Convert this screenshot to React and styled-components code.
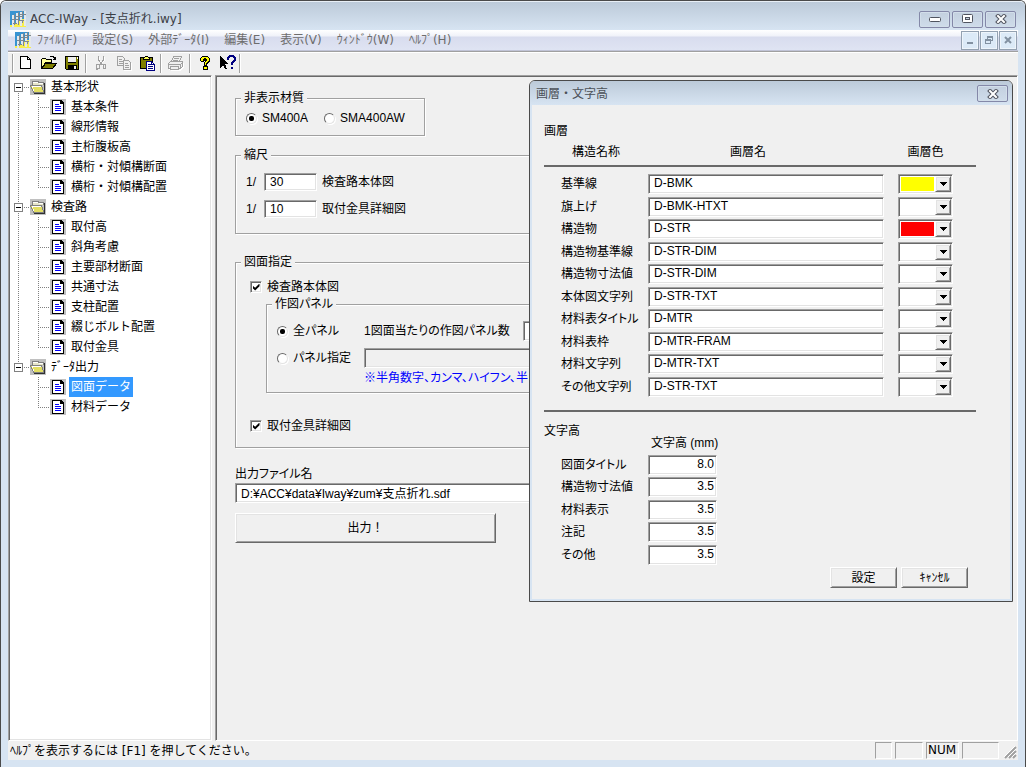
import React, { useState } from 'react';
import styled, { createGlobalStyle, css } from 'styled-components';

const GlobalStyle = createGlobalStyle`
  * {
    box-sizing: border-box;
  }

  body {
    background: #fff;
    color: #000;
    font: 12px/16px 'DejaVu Sans', 'Noto Sans CJK JP', sans-serif;
    margin: 0;
  }

  input,
  select,
  button {
    color: inherit;
    font: inherit;
    margin: 0;
  }
`;

const sunken = css`
  border: 1px solid;
  border-color: #a0a0a0 #fff #fff #a0a0a0;
  box-shadow: inset 1px 1px 0 #696969, inset -1px -1px 0 #e3e3e3;
`;

const raised = css`
  background: #f0f0f0;
  border: 1px solid;
  border-color: #fff #696969 #696969 #fff;
  box-shadow: inset 1px 1px 0 #e3e3e3, inset -1px -1px 0 #a0a0a0;
`;

const formFont = css`
  font-family: 'Liberation Sans', 'Noto Sans CJK JP', sans-serif;
  font-feature-settings: 'palt';
`;

/* window frame */

const Window = styled.div`
  background: #d7e4f2;
  border: solid #4a4a4a;
  border-width: 1px 1px 0;
  border-radius: 6px 6px 0 0;
  display: flex;
  flex-direction: column;
  min-height: 100vh;
  padding: 0 7px 7px;
  position: relative;
`;

const TitleBar = styled.header`
  align-items: center;
  background: linear-gradient(#bccad9, #d7e4f2);
  border-radius: 5px 5px 0 0;
  border-top: 1px solid #e8eff6;
  color: #3c4046;
  display: flex;
  gap: 4px;
  height: 29px;
  margin: 0 -7px;
  padding: 6px 9px 0;
`;

const Title = styled.h1`
  flex: 1;
  font-size: 12px;
  font-weight: normal;
  margin: 0;
`;

const CaptionButtons = styled.div`
  display: flex;
  gap: 2px;
`;

const CaptionButton = styled.button`
  align-items: center;
  background: linear-gradient(#c3d0df, #cfdcea);
  border: 1px solid #8488a8;
  border-radius: 2px;
  box-shadow: inset 0 0 0 1px #d2deea;
  display: flex;
  height: 17px;
  justify-content: center;
  padding: 0;
  width: 31px;
`;

const MenuBar = styled.nav`
  align-items: center;
  background: linear-gradient(#fff, #f0f2f9 6px, #d8dcee 7px, #dfe4f3);
  border-bottom: 1px solid #c0c3d6;
  color: #6d6d6d;
  display: flex;
  height: 21px;
  padding-left: 7px;
`;

const MenuItems = styled.div`
  display: flex;
  flex: 1;
  gap: 15px;
  padding-left: 6px;
`;

const MenuButton = styled.button`
  background: none;
  border: 0;
  padding: 0;
`;

const ChildButton = styled.button`
  align-items: center;
  background: #dceaf7;
  border: 1px solid #93a1b1;
  box-shadow: inset 0 0 0 1px #eef5fb;
  display: flex;
  height: 19px;
  justify-content: center;
  padding: 0;
  width: 18px;
`;

const ChildButtons = styled.div`
  display: flex;
  gap: 1px;
  padding-right: 1px;
`;

const ToolBar = styled.div`
  align-items: center;
  background: #f0f0f0;
  border-top: 1px solid #a0a0a0;
  box-shadow: inset 0 1px 0 #fff;
  display: flex;
  height: 24px;
  padding: 0 0 1px 4px;
`;

const ToolButton = styled.button`
  background: none;
  border: 0;
  display: grid;
  height: 20px;
  padding: 0;
  place-items: center;
  width: 23px;
`;

const Separator = styled.span`
  border-left: 1px solid #a0a0a0;
  border-right: 1px solid #fff;
  height: 19px;
  margin: 0 2px;
  width: 2px;
`;

const ToolEdge = styled(Separator)`
  margin: 0;
`;

const Workspace = styled.div`
  background: #f0f0f0;
  display: grid;
  flex: 1;
  gap: 3px;
  grid-template-columns: 204px minmax(0, 1fr);
`;

/* tree */

const TreePane = styled.aside`
  ${sunken}
  background: #fff;
  padding: 1px;
`;

const TreeList = styled.ul`
  list-style: none;
  margin: 0;
  padding: 0;
`;

const TreeRow = styled.div`
  align-items: center;
  display: flex;
  height: 20px;
`;

const TreeText = styled.a`
  background: ${(p) => (p.$active ? '#3399ff' : 'transparent')};
  color: ${(p) => (p.$active ? '#fff' : '#000')};
  line-height: 20px;
  margin-left: 3px;
  padding: 0 2px;
  text-decoration: none;
`;

/* form */

const FormPane = styled.main`
  ${formFont}
  border-left: 1px solid #a0a0a0;
  border-top: 1px solid #a0a0a0;
  border-bottom: 1px solid #fff;
  border-right: 1px solid #fff;
  box-shadow: inset 1px 1px 0 #696969;
  padding: 14px 20px 14px 19px;
`;

const Group = styled.fieldset`
  border: 1px solid #a0a0a0;
  box-shadow: 1px 1px 0 #fff, inset 1px 1px 0 #fff;
  margin: 0;
  min-width: 0;
  padding: 0;

  & > legend {
    background: #f0f0f0;
    line-height: 16px;
    margin-left: 5px;
    padding: 0 3px;
  }
`;

const MaterialGroup = styled(Group)`
  width: 190px;
`;

const ScaleGroup = styled(Group)`
  margin-top: 11px;
`;

const DrawingGroup = styled(Group)`
  margin-top: 20px;
  padding-bottom: 13px;
`;

const PanelGroup = styled(Group)`
  margin: 1px 14px 25px 30px;
`;

const MaterialRow = styled.div`
  display: flex;
  gap: 16px;
  padding: 4px 10px 9px;
`;

const ScaleRows = styled.div`
  display: grid;
  gap: 10px;
  padding: 10px 10px 16px;
`;

const ScaleRow = styled.label`
  align-items: center;
  display: grid;
  gap: 5px;
  grid-template-columns: 13px 53px auto;
  height: 17px;
`;

const CheckRow = styled.div`
  padding-left: 14px;

  legend + & {
    padding-top: 9px;
  }
`;

const PanelGrid = styled.div`
  align-items: center;
  display: grid;
  gap: 7px 0;
  grid-template-columns: 87px minmax(0, 1fr);
  padding: 9px 10px 0;
`;

const CountField = styled.div`
  align-items: center;
  display: grid;
  grid-template-columns: 159px 53px;
`;

const Note = styled.p`
  color: #00f;
  margin: 2px 0 6px 97px;
  white-space: nowrap;
`;

const Choice = styled.label`
  align-items: center;
  display: flex;
  gap: 5px;
`;

const Radio = styled.input.attrs({ type: 'radio' })`
  appearance: none;
  background: #fff;
  border: 1px solid;
  border-color: #696969 #e3e3e3 #e3e3e3 #696969;
  border-radius: 50%;
  box-shadow: 1px 1px 0 #fff;
  display: grid;
  height: 11px;
  place-items: center;
  width: 11px;

  &:checked::before {
    background: #000;
    border-radius: 2px;
    content: '';
    height: 5px;
    width: 5px;
  }
`;

const CheckBox = styled.input.attrs({ type: 'checkbox' })`
  ${sunken}
  appearance: none;
  background: #fff;
  display: grid;
  height: 12px;
  place-items: center;
  width: 12px;

  &:checked::before {
    background: #000;
    clip-path: polygon(0 30%, 38% 62%, 100% 0, 100% 40%, 38% 100%, 0 66%);
    content: '';
    height: 7px;
    width: 7px;
  }
`;

const TextBox = styled.input.attrs({ type: 'text' })`
  ${sunken}
  ${formFont}
  background: #fff;
  display: block;
  height: 20px;
  line-height: 14px;
  padding: 0 5px 2px;
  text-align: ${(p) => (p.$numeric ? 'right' : 'left')};
  width: 100%;

  &:disabled {
    background: #f0f0f0;
  }
`;

const ScaleBox = styled(TextBox)`
  height: 18px;
  padding-bottom: 0;
`;

const NumberBox = styled(TextBox)`
  padding: 0 2px 2px;
`;

const OutputField = styled.label`
  display: grid;
  gap: 1px;
  margin: 18px 0 10px;
`;

const PushButton = styled.button`
  ${raised}
  ${formFont}
  font-feature-settings: normal;
  height: ${(p) => (p.$large ? 30 : 21)}px;
  padding: 0;
  width: ${(p) => (p.$large ? 261 : 67)}px;
`;

/* dialog */

const Dialog = styled.section`
  ${formFont}
  background: #f0f0f0;
  border: 1px solid #4a4a4a;
  border-radius: 6px 6px 0 0;
  box-shadow: inset 0 0 0 2px #d7e4f2;
  padding: 0 2px 2px;
  position: absolute;
  right: 12px;
  top: 79px;
  width: 484px;
`;

const DialogTitle = styled.header`
  align-items: center;
  background: linear-gradient(#bccad9, #d7e4f2);
  border-radius: 5px 5px 0 0;
  color: #4b5057;
  display: flex;
  height: 24px;
  justify-content: space-between;
  margin: 0 -2px;
  padding: 1px 4px 0 6px;
`;

const DialogHeading = styled.h2`
  font-feature-settings: normal;
  font-size: 12px;
  font-weight: normal;
  margin: 0;
`;

const DialogBody = styled.div`
  padding: 18px 34px 11px 12px;
`;

const SectionTitle = styled.h3`
  font-size: 12px;
  font-weight: normal;
  margin: 0;
`;

const LayerTable = styled.table`
  border-bottom: 2px solid #696969;
  border-spacing: 0;
  padding-bottom: 11px;
  table-layout: fixed;
  width: 100%;

  th,
  td {
    font-weight: normal;
    padding: 0;
    vertical-align: top;
  }

  thead th {
    border-bottom: 2px solid #696969;
    height: 28px;
    vertical-align: middle;
  }

  tbody::before {
    content: '';
    display: block;
    height: 7px;
  }

  tbody tr:nth-child(odd) {
    height: 23px;
  }

  tbody tr:nth-child(even) {
    height: 22px;
  }
`;

const NameHead = styled.th`
  width: 104px;
`;

const LayerHead = styled.th`
  && {
    padding-right: 50px;
  }
`;

const ColorHead = styled.th`
  width: 55px;
`;

const EdgeHead = styled.th`
  width: 23px;
`;

const RowHead = styled.th`
  line-height: 20px;
  text-align: left;

  label {
    padding-left: 17px;
  }
`;

const LayerCell = styled.td`
  && {
    padding-right: 14px;
  }
`;

const SelectBox = styled.div`
  position: relative;
`;

const ColorSelect = styled.select`
  ${sunken}
  appearance: none;
  background: #fff;
  border-radius: 0;
  display: block;
  height: 20px;
  padding: 2px 18px 2px 2px;
  width: 100%;

  ${(p) =>
    p.$color &&
    css`
      background: linear-gradient(${p.$color}, ${p.$color}) content-box, #fff;
    `}
`;

const DropArrow = styled.span`
  ${raised}
  display: grid;
  height: 16px;
  place-items: center;
  pointer-events: none;
  position: absolute;
  right: 2px;
  top: 2px;
  width: 16px;
`;

const HeightHead = styled.div`
  display: grid;
  grid-template-columns: 104px auto;
  margin: 11px 0 4px;
`;

const HeightUnit = styled.span`
  padding: 12px 0 0 3px;
`;

const HeightGrid = styled.div`
  display: grid;
  grid-auto-rows: 22px 23px;
  grid-template-columns: 87px 69px;
  padding-left: 17px;

  label {
    line-height: 20px;
  }
`;

const DialogActions = styled.div`
  display: flex;
  gap: 4px;
  justify-content: flex-end;
  padding-right: 8px;
`;

/* status bar */

const StatusBar = styled.footer`
  align-items: center;
  background: #f0f0f0;
  display: flex;
  gap: 3px;
  height: 19px;
  padding-left: 2px;
`;

const StatusText = styled.span`
  flex: 1;
`;

const StatusCell = styled.span`
  border: 1px solid;
  border-color: #a0a0a0 #fff #fff #a0a0a0;
  height: 17px;
  line-height: 15px;
  padding-left: 1px;
  width: ${(p) => p.$width}px;
`;

/* drawings */

const AppIcon = () => (
  <svg width="16" height="16" shapeRendering="crispEdges" aria-hidden="true">
    <path fill="#3894d2" d="M0 0h16v16H0z" />
    <path fill="#f8ee4a" d="M6 10h2V9h3V8h3V7h2v9H0v-2h3v-2h3z" />
    <path
      fill="#e4e8ea"
      d="M2 4h2v12H2zM6 2h2v11H6zM10 1h2v14h-2zM14 0h2v15h-2z"
    />
    <path
      fill="#7d8890"
      d="M4 3h1v11H4zM8 1h1v13H8zM12 0h1v7h-1zM12 9h1v6h-1zM2 8h6v1H2zM6 5h6v1H6zM10 3h6v1h-6zM3 12h4v1H3zM9 9h5v1H9z"
    />
    <path fill="#f8ee4a" d="M5 13h3v2H5zM9 12h1v4H9zM12 12h2v4h-2z" />
  </svg>
);

const MinimizeIcon = () => (
  <svg width="12" height="8">
    <rect x="0.5" y="2.5" width="11" height="4" rx="1" fill="#fff" stroke="#50545f" />
  </svg>
);

const MaximizeIcon = () => (
  <svg width="12" height="10">
    <rect x="0.5" y="0.5" width="10" height="8" rx="1" fill="#fff" stroke="#50545f" />
    <rect x="3.5" y="3.5" width="4" height="2" fill="#c5d1df" stroke="#50545f" />
  </svg>
);

const CloseIcon = () => (
  <svg width="12" height="10" fill="none" strokeLinecap="square">
    <path d="M3 2l6 6M9 2L3 8" stroke="#50545f" strokeWidth="4" />
    <path d="M3 2l6 6M9 2L3 8" stroke="#fff" strokeWidth="2" />
  </svg>
);

const ChildMinimizeIcon = () => (
  <svg width="8" height="8" shapeRendering="crispEdges">
    <path d="M1 6h6v2H1z" fill="#8291a1" />
  </svg>
);

const ChildRestoreIcon = () => (
  <svg width="9" height="9" shapeRendering="crispEdges" fill="none" stroke="#8291a1">
    <path d="M2.500 3V.5h5v4H6M3 1.500h5" />
    <path d="M.5 3.500h5v4h-5zM1 4.500h5" />
  </svg>
);

const ChildCloseIcon = () => (
  <svg width="8" height="8">
    <path d="M1 1l6 6M7 1L1 7" stroke="#8291a1" strokeWidth="2" />
  </svg>
);

const NewIcon = () => (
  <svg width="16" height="16" shapeRendering="crispEdges">
    <path d="M2.500 1.500h7l3 3v9h-10z" fill="#fff" stroke="#000" />
    <path d="M9.500 1.500v3h3" fill="none" stroke="#000" />
  </svg>
);

const OpenIcon = () => (
  <svg width="16" height="16" shapeRendering="crispEdges">
    <path d="M.5 13.500v-9l1-1h3l1 1h5v3h-6z" fill="#ffff9a" stroke="#000" />
    <path d="M.5 13.500l4-5h11l-4 5z" fill="#808000" stroke="#000" />
    <path d="M9 1.500h3v1h1v1h1M12 4.500h3M14.500 2v3" fill="none" stroke="#000" />
  </svg>
);

const SaveIcon = () => (
  <svg width="16" height="16" shapeRendering="crispEdges">
    <path d="M1.500 1.500h13v13h-12l-1-1z" fill="#808000" stroke="#000" />
    <path d="M4 1h8v7H4zM4 10h9v5H4z" fill="#000" />
    <path d="M4 2h8v5H4zM10 11h2v3h-2z" fill="#f0f0f0" />
    <path d="M13 2h1v2h-1z" fill="#fff" />
  </svg>
);

const CutIcon = () => (
  <svg width="16" height="16" shapeRendering="crispEdges" fill="none">
    <path d="M6.500 2v4l4 5M11.500 2v3l-4 5" stroke="#fff" />
    <path d="M5.500 1v4l4 5M10.500 1v4l-4 5" stroke="#a0a0a0" />
    <path d="M4 9.500h2v4H4v1H3v-4zM10 9.500h2v4h-2z" stroke="#a0a0a0" />
  </svg>
);

const CopyIcon = () => (
  <svg width="16" height="16" shapeRendering="crispEdges" stroke="#a0a0a0" fill="#f0f0f0">
    <path d="M1.500 1.500h5l2 2v7h-7zM3 4.500h3M3 6.500h4M3 8.500h4" />
    <path d="M7.500 5.500h5l2 2v7h-7zM9 8.500h3M9 10.500h4M9 12.500h4" />
    <path d="M15.500 8v7.500H8" stroke="#fff" fill="none" />
  </svg>
);

const PasteIcon = () => (
  <svg width="16" height="16" shapeRendering="crispEdges">
    <path d="M1.500 2.500h12v11h-12z" fill="#808000" stroke="#000" />
    <path d="M4.500 3.500v-1h1l1-1h2l1 1h1v2h-6z" fill="#ffff5a" stroke="#000" />
    <path d="M7.500 6.500h5l3 3v6h-8z" fill="#fff" stroke="#000080" />
    <path d="M9 9.500h3M9 11.500h5M9 13.500h5M12.500 7v2.500H15" fill="none" stroke="#000080" />
  </svg>
);

const PrintIcon = () => (
  <svg width="17" height="16" shapeRendering="crispEdges" stroke="#a0a0a0" fill="#f0f0f0">
    <path d="M4.500 6.500l2-5h8l-2 5zM7 3.500h5M6 5.500h5" />
    <path d="M1.500 8.500l2-2h12v5l-2 2h-12zM2 9.500h12M13.500 10v3M14 8.500h1" />
    <path d="M3.500 11.500h8v3h-8z" />
    <path d="M2 14.500h1M4 15.500h9l3-3V8" stroke="#fff" fill="none" />
  </svg>
);

const HelpIcon = () => (
  <svg width="16" height="16" shapeRendering="crispEdges">
    <path d="M5 1h6v1h1v1h1v4h-1v1h-1v1h-1v2h1v4H6v-4h1V7h1V6H7v1H4V6H3V3h1V2h1z" fill="#000" />
    <path
      d="M5 2h6v1h1v3h-1v1h-1v1H9v2H8V7h1V6h1V4H9V3H7v1H6v2H4V3h1zM7 12h3v2H7z"
      fill="#ff0"
    />
  </svg>
);

const ContextHelpIcon = () => (
  <svg width="16" height="16" shapeRendering="crispEdges">
    <path d="M0 1l8 8H5l2 5H5l-2-4-3 3z" fill="#000" />
    <path d="M8 5V3l2-2h3l2 2v2l-3 3v2M12 12v2" stroke="#000080" strokeWidth="2" fill="none" />
  </svg>
);

const FolderIcon = () => (
  <svg width="16" height="16" shapeRendering="crispEdges" aria-hidden="true">
    <path fill="#c0c0c0" d="M0 0h16v16H0z" />
    <path d="M2.500 6v-3l1-1h4l1 1h4.500v3" fill="#e6e6c8" stroke="#808080" />
    <path d="M3 3.500h5M9 4.500h4" stroke="#fff" />
    <path d="M.5 6.500h11l2.500 7H3.500z" fill="#e2de62" stroke="#808080" />
    <path d="M2 7.500h9M2.500 8v1M3.500 10v2" stroke="#fff" />
    <path d="M14.500 4v10.500H4" fill="none" stroke="#303030" />
  </svg>
);

const PageIcon = () => (
  <svg width="16" height="16" shapeRendering="crispEdges" aria-hidden="true">
    <path fill="#c0c0c0" d="M0 0h16v16H0z" />
    <path d="M2 1h9l3 3v11H2z" fill="#000" />
    <path d="M3 2h7v3h3v9H3z" fill="#fff" />
    <path d="M5 5.500h4M5 7.500h6M5 9.500h6M5 11.500h6" stroke="#00f" />
  </svg>
);

const RootLines = ({ first, last }) => (
  <svg width="20" height="20" shapeRendering="crispEdges" aria-hidden="true">
    <g stroke="#808080" strokeDasharray="1 1">
      {!first && <path d="M8.500 0v6" />}
      {!last && <path d="M8.500 14v6" />}
      <path d="M14 10.500h6" />
    </g>
    <rect x="4.500" y="6.500" width="8" height="8" fill="#fff" stroke="#808080" />
    <path d="M6 10.500h5" stroke="#000" />
  </svg>
);

const LeafLines = ({ last, lastGroup }) => (
  <svg width="40" height="20" shapeRendering="crispEdges" aria-hidden="true">
    <g stroke="#808080" strokeDasharray="1 1">
      {!lastGroup && <path d="M8.500 0v20" />}
      <path d={last ? 'M28.500 0v11' : 'M28.500 0v20'} />
      <path d="M28 10.500h11" />
    </g>
  </svg>
);

const ArrowIcon = () => (
  <svg width="7" height="4" shapeRendering="crispEdges">
    <path d="M0 0h7v1H6v1H5v1H4v1H3V3H2V2H1V1H0z" />
  </svg>
);

const SizeGrip = () => (
  <svg width="16" height="16" aria-hidden="true">
    <path d="M3 15L14 4M7 15l7-7M11 15l3-3" stroke="#a0a0a0" strokeWidth="2" />
    <path d="M2 14L13 3M6 14l8-8M10 14l4-4" stroke="#fff" />
  </svg>
);

const menus = [
  'ﾌｧｲﾙ(F)',
  '設定(S)',
  '外部ﾃﾞｰﾀ(I)',
  '編集(E)',
  '表示(V)',
  'ｳｨﾝﾄﾞｳ(W)',
  'ﾍﾙﾌﾟ(H)',
];

const toolGroups = [
  [
    ['新規作成', NewIcon],
    ['開く', OpenIcon],
    ['保存', SaveIcon],
  ],
  [
    ['切り取り', CutIcon],
    ['コピー', CopyIcon],
    ['貼り付け', PasteIcon],
  ],
  [['印刷', PrintIcon]],
  [
    ['バージョン情報', HelpIcon],
    ['ヘルプ', ContextHelpIcon],
  ],
];

const tree = [
  {
    name: '基本形状',
    items: ['基本条件', '線形情報', '主桁腹板高', '横桁・対傾構断面', '横桁・対傾構配置'],
  },
  {
    name: '検査路',
    items: [
      '取付高',
      '斜角考慮',
      '主要部材断面',
      '共通寸法',
      '支柱配置',
      '綴じボルト配置',
      '取付金具',
    ],
  },
  { name: 'ﾃﾞｰﾀ出力', items: ['図面データ', '材料データ'] },
];

const layers = [
  { name: '基準線', layer: 'D-BMK', color: '#ffff00' },
  { name: '旗上げ', layer: 'D-BMK-HTXT' },
  { name: '構造物', layer: 'D-STR', color: '#ff0000' },
  { name: '構造物基準線', layer: 'D-STR-DIM' },
  { name: '構造物寸法値', layer: 'D-STR-DIM' },
  { name: '本体図文字列', layer: 'D-STR-TXT' },
  { name: '材料表タイトル', layer: 'D-MTR' },
  { name: '材料表枠', layer: 'D-MTR-FRAM' },
  { name: '材料文字列', layer: 'D-MTR-TXT' },
  { name: 'その他文字列', layer: 'D-STR-TXT' },
];

const heights = [
  ['図面タイトル', '8.0'],
  ['構造物寸法値', '3.5'],
  ['材料表示', '3.5'],
  ['注記', '3.5'],
  ['その他', '3.5'],
];

const Tree = () => {
  const [active, setActive] = useState('図面データ');

  return (
    <TreePane>
      <TreeList>
        {tree.map((group, g) => (
          <li key={group.name}>
            <TreeRow>
              <RootLines first={g === 0} last={g === tree.length - 1} />
              <FolderIcon />
              <TreeText href="#">{group.name}</TreeText>
            </TreeRow>
            <TreeList>
              {group.items.map((item, i) => (
                <li key={item}>
                  <TreeRow>
                    <LeafLines
                      last={i === group.items.length - 1}
                      lastGroup={g === tree.length - 1}
                    />
                    <PageIcon />
                    <TreeText
                      href="#"
                      $active={item === active}
                      onClick={() => setActive(item)}
                    >
                      {item}
                    </TreeText>
                  </TreeRow>
                </li>
              ))}
            </TreeList>
          </li>
        ))}
      </TreeList>
    </TreePane>
  );
};

const OutputForm = () => (
  <FormPane>
    <MaterialGroup>
      <legend>非表示材質</legend>
      <MaterialRow>
        <Choice>
          <Radio name="material" defaultChecked />
          SM400A
        </Choice>
        <Choice>
          <Radio name="material" />
          SMA400AW
        </Choice>
      </MaterialRow>
    </MaterialGroup>

    <ScaleGroup>
      <legend>縮尺</legend>
      <ScaleRows>
        <ScaleRow>
          <span>1/</span>
          <ScaleBox defaultValue="30" />
          <span>検査路本体図</span>
        </ScaleRow>
        <ScaleRow>
          <span>1/</span>
          <ScaleBox defaultValue="10" />
          <span>取付金具詳細図</span>
        </ScaleRow>
      </ScaleRows>
    </ScaleGroup>

    <DrawingGroup>
      <legend>図面指定</legend>
      <CheckRow>
        <Choice>
          <CheckBox defaultChecked />
          検査路本体図
        </Choice>
      </CheckRow>
      <PanelGroup>
        <legend>作図パネル</legend>
        <PanelGrid>
          <Choice>
            <Radio name="panel" defaultChecked />
            全パネル
          </Choice>
          <CountField>
            <label htmlFor="panel-count">1図面当たりの作図パネル数</label>
            <TextBox id="panel-count" />
          </CountField>
          <Choice>
            <Radio name="panel" />
            パネル指定
          </Choice>
          <TextBox aria-label="パネル指定" disabled />
        </PanelGrid>
        <Note>※半角数字、カンマ、ハイフン、半</Note>
      </PanelGroup>
      <CheckRow>
        <Choice>
          <CheckBox defaultChecked />
          取付金具詳細図
        </Choice>
      </CheckRow>
    </DrawingGroup>

    <OutputField>
      出力ファイル名
      <TextBox defaultValue="D:¥ACC¥data¥Iway¥zum¥支点折れ.sdf" />
    </OutputField>
    <PushButton $large>出力！</PushButton>
  </FormPane>
);

const LayerRow = ({ id, name, layer, color }) => (
  <tr>
    <RowHead scope="row">
      <label htmlFor={id}>{name}</label>
    </RowHead>
    <LayerCell>
      <TextBox id={id} defaultValue={layer} />
    </LayerCell>
    <td>
      <SelectBox>
        <ColorSelect aria-label={name} $color={color}>
          <option value={color || ''} />
        </ColorSelect>
        <DropArrow>
          <ArrowIcon />
        </DropArrow>
      </SelectBox>
    </td>
    <td />
  </tr>
);

const LayerDialog = () => (
  <Dialog role="dialog" aria-labelledby="layer-dialog-title">
    <DialogTitle>
      <DialogHeading id="layer-dialog-title">画層・文字高</DialogHeading>
      <CaptionButton aria-label="閉じる">
        <CloseIcon />
      </CaptionButton>
    </DialogTitle>
    <DialogBody>
      <SectionTitle>画層</SectionTitle>
      <LayerTable>
        <thead>
          <tr>
            <NameHead scope="col">構造名称</NameHead>
            <LayerHead scope="col">画層名</LayerHead>
            <ColorHead scope="col">画層色</ColorHead>
            <EdgeHead />
          </tr>
        </thead>
        <tbody>
          {layers.map((row, i) => (
            <LayerRow key={row.name} id={`layer-${i}`} {...row} />
          ))}
        </tbody>
      </LayerTable>

      <HeightHead>
        <SectionTitle>文字高</SectionTitle>
        <HeightUnit>文字高 (mm)</HeightUnit>
      </HeightHead>
      <HeightGrid>
        {heights.map(([name, value], i) => (
          <React.Fragment key={name}>
            <label htmlFor={`height-${i}`}>{name}</label>
            <NumberBox id={`height-${i}`} $numeric defaultValue={value} />
          </React.Fragment>
        ))}
      </HeightGrid>
      <DialogActions>
        <PushButton>設定</PushButton>
        <PushButton>ｷｬﾝｾﾙ</PushButton>
      </DialogActions>
    </DialogBody>
  </Dialog>
);

const App = () => (
  <Window>
    <GlobalStyle />
    <TitleBar>
      <AppIcon />
      <Title>ACC-IWay - [支点折れ.iwy]</Title>
      <CaptionButtons>
        <CaptionButton aria-label="最小化">
          <MinimizeIcon />
        </CaptionButton>
        <CaptionButton aria-label="最大化">
          <MaximizeIcon />
        </CaptionButton>
        <CaptionButton aria-label="閉じる">
          <CloseIcon />
        </CaptionButton>
      </CaptionButtons>
    </TitleBar>
    <MenuBar>
      <AppIcon />
      <MenuItems>
        {menus.map((menu) => (
          <MenuButton key={menu}>{menu}</MenuButton>
        ))}
      </MenuItems>
      <ChildButtons>
        <ChildButton aria-label="最小化">
          <ChildMinimizeIcon />
        </ChildButton>
        <ChildButton aria-label="元に戻す">
          <ChildRestoreIcon />
        </ChildButton>
        <ChildButton aria-label="閉じる">
          <ChildCloseIcon />
        </ChildButton>
      </ChildButtons>
    </MenuBar>
    <ToolBar role="toolbar">
      <ToolEdge />
      {toolGroups.map((group, g) => (
        <React.Fragment key={group[0][0]}>
          {g > 0 && <Separator />}
          {group.map(([label, Icon]) => (
            <ToolButton key={label} aria-label={label}>
              <Icon />
            </ToolButton>
          ))}
        </React.Fragment>
      ))}
      <ToolEdge />
    </ToolBar>
    <Workspace>
      <Tree />
      <OutputForm />
    </Workspace>
    <StatusBar>
      <StatusText>ﾍﾙﾌﾟを表示するには [F1] を押してください。</StatusText>
      <StatusCell $width={17} />
      <StatusCell $width={28} />
      <StatusCell $width={33}>NUM</StatusCell>
      <StatusCell $width={37} />
      <SizeGrip />
    </StatusBar>
    <LayerDialog />
  </Window>
);

export default App;
